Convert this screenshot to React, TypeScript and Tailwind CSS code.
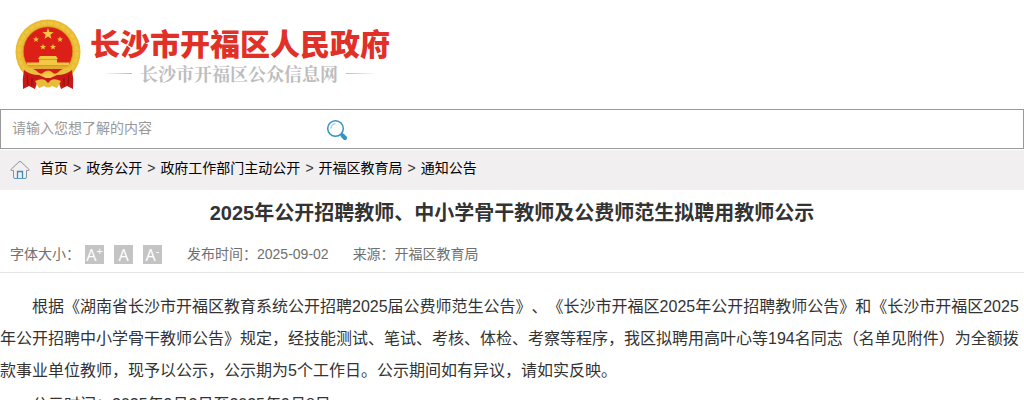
const star = "M0 -1 L0.235 -0.324 L0.951 -0.309 L0.38 0.124 L0.588 0.809 L0 0.4 L-0.588 0.809 L-0.38 0.124 L-0.951 -0.309 L-0.235 -0.324 Z";

function Emblem() {
  return (
    <svg viewBox="0 1 66 71" preserveAspectRatio="none" className="h-[71px] w-[66px] shrink-0" aria-hidden="true">
      <circle cx="33" cy="34" r="32.500" fill="#e9bb34" />
      <circle cx="33" cy="34" r="29" fill="none" stroke="#f0c640" strokeWidth="3" strokeDasharray="5 1.500" />
      <circle cx="33" cy="33.500" r="24.800" fill="#dc2018" stroke="#d39b1e" strokeWidth="0.800" />
      <g fill="#f3c944">
        <path d={star} transform="translate(33 16) scale(6)" />
        <path d={star} transform="translate(21 21.500) scale(3.200)" />
        <path d={star} transform="translate(45 21.500) scale(3.200)" />
        <path d={star} transform="translate(28 29) scale(3.200)" />
        <path d={star} transform="translate(38 29) scale(3.200)" />
        <path d="M25 38 H41 L43 41 H42 V44.500 H54 V47.500 H12 V44.500 H24 V41 H23 Z" />
        <path d="M12 47.500 H54 L52 51 H14 Z" fill="#e3ac30" />
      </g>
      <path d="M24 41.500 H42" stroke="#c98a1c" strokeWidth="0.700" />
      <path d="M14 51 H52 L46 58 H20 Z" fill="#d61d16" />
      <path d="M8 49 Q17 48 24 55 Q27 57 29 54 Q33 51 37 54 Q39 57 42 55 Q49 48 58 49 L55 60 H11 Z" fill="#ecc03c" />
      <path d="M9 52 Q15 57 24 57 Q29 60 33 60 Q37 60 42 57 Q51 57 57 52 Q59 61 58 71 L52 68 L46 71 L44 65 H22 L20 71 L14 68 L8 71 Q7 61 9 52 Z" fill="#c91818" />
      <path d="M28 57 Q33 54 38 57 L36 60 H30 Z" fill="#f3ca49" />
      <path d="M20 63 Q26 60 30 62 L33 65 L36 62 Q40 60 46 63 L42 70 L37 68 Q33 71 29 68 L24 70 Z" fill="#e9bb3b" />
      <path d="M12 57 L13 67 M17 60 L17 68 M54 57 L53 67 M49 60 L49 68" stroke="#930f10" fill="none" />
    </svg>
  );
}

function SearchIcon() {
  return (
    <svg viewBox="0 0 22 22" className="size-[22px]" fill="none" aria-hidden="true">
      <circle cx="9.500" cy="9.500" r="7.800" stroke="#3392c6" strokeWidth="1.500" />
      <path d="M5 9.500 A4.500 4.500 0 0 1 9.500 4.700" stroke="#7db9dc" strokeWidth="1" />
      <path d="M15 15 L16.500 16.500" stroke="#3392c6" strokeWidth="2" />
      <path d="M16.500 16.500 L19 19" stroke="#3392c6" strokeWidth="4.200" strokeLinecap="round" />
    </svg>
  );
}

function HomeIcon() {
  return (
    <svg viewBox="0 0 20 20" className="size-5 shrink-0" fill="none" aria-hidden="true">
      <path d="M3.500 10.500 H1.500 Q0.200 10.500 1.200 9.300 L9 1.800 Q10 1 11 1.800 L18.800 9.300 Q19.800 10.500 18.500 10.500 H16.500 V17 Q16.500 18.500 15 18.500 H5 Q3.500 18.500 3.500 17 Z" stroke="#8a9298" />
      <path d="M7.500 18 V11.500 H12.500 V18" stroke="#3c8dbd" strokeWidth="1.300" />
      <path d="M4 18.500 H16" stroke="#5f9fc5" />
    </svg>
  );
}

const crumbs = ["首页", "政务公开", "政府工作部门主动公开", "开福区教育局", "通知公告"];

function SizeButton({ label, sign }: { label: string; sign?: string }) {
  return (
    <button type="button" aria-label={label} className="flex size-[19px] items-end justify-center bg-[#c4c4c4] font-['Noto_Sans',sans-serif] text-base leading-[18px] text-white">
      <span>A</span>
      {sign && <span className="self-start text-[11px] leading-[11px]">{sign}</span>}
    </button>
  );
}

export default function App() {
  return (
    <div className="h-screen overflow-hidden bg-white font-['Liberation_Sans','Noto_Sans_CJK_SC',sans-serif] text-[#333] [text-spacing-trim:space-all]">
      <header className="flex h-[109px] items-start pt-[19px] pl-[15px]">
        <Emblem />
        <div className="pt-2 pl-[9px]">
          <div className="text-[30px] leading-9 font-black text-[#e03028]">长沙市开福区人民政府</div>
          <div className="flex items-center gap-2 pl-3 text-[18px] leading-5 font-bold text-[#bdbdbd]">
            <span className="h-px w-[30px] bg-linear-to-r from-white to-[#bbb]" />
            <span className="font-['Noto_Serif_CJK_SC','Noto_Sans_CJK_SC',serif]">长沙市开福区公众信息网</span>
            <span className="h-px w-[30px] bg-linear-to-l from-white to-[#bbb]" />
          </div>
        </div>
      </header>

      <form className="flex h-10 items-center border border-[#999] pl-[11px]" onSubmit={(e) => e.preventDefault()}>
        <input type="text" aria-label="请输入您想了解的内容" placeholder="请输入您想了解的内容" className="h-9 w-[314px] bg-transparent pb-0.5 text-sm outline-none placeholder:text-[#999]" />
        <button type="submit" aria-label="搜索" className="pt-0.5">
          <SearchIcon />
        </button>
      </form>

      <nav className="mt-px flex h-10 items-center gap-[10px] bg-[#f1eff0] pl-[10px] text-sm">
        <HomeIcon />
        <ol className="flex gap-[5px] pb-1">
          {crumbs.map((c, i) => (
            <li key={c} className="flex gap-[5px]">
              {i > 0 && <span>&gt;</span>}
              <a href="#" className="text-black">{c}</a>
            </li>
          ))}
        </ol>
      </nav>

      <main>
        <h1 className="text-center text-xl leading-[46px] font-bold">2025年公开招聘教师、中小学骨干教师及公费师范生拟聘用教师公示</h1>
        <div className="flex h-[37px] items-center border-b border-[#e5e5e5] pl-[10px] text-sm text-[#707070]">
          <span>字体大小：</span>
          <div className="flex gap-[10px] pt-px pl-[5px]">
            <SizeButton label="放大字体" sign="+" />
            <SizeButton label="默认字体" />
            <SizeButton label="缩小字体" sign="-" />
          </div>
          <span className="pl-[25px]">发布时间：2025-09-02</span>
          <span className="pl-6">来源：开福区教育局</span>
        </div>
        <article className="space-y-0.5 pt-[18px] text-base leading-8">
          <p className="indent-8">根据《湖南省长沙市开福区教育系统公开招聘2025届公费师范生公告》、《长沙市开福区2025年公开招聘教师公告》和《长沙市开福区2025年公开招聘中小学骨干教师公告》规定，经技能测试、笔试、考核、体检、考察等程序，我区拟聘用高叶心等194名同志（名单见附件）为全额拨款事业单位教师，现予以公示，公示期为5个工作日。公示期间如有异议，请如实反映。</p>
          <p className="indent-8">公示时间：2025年9月2日至2025年9月8日</p>
        </article>
      </main>
    </div>
  );
}
